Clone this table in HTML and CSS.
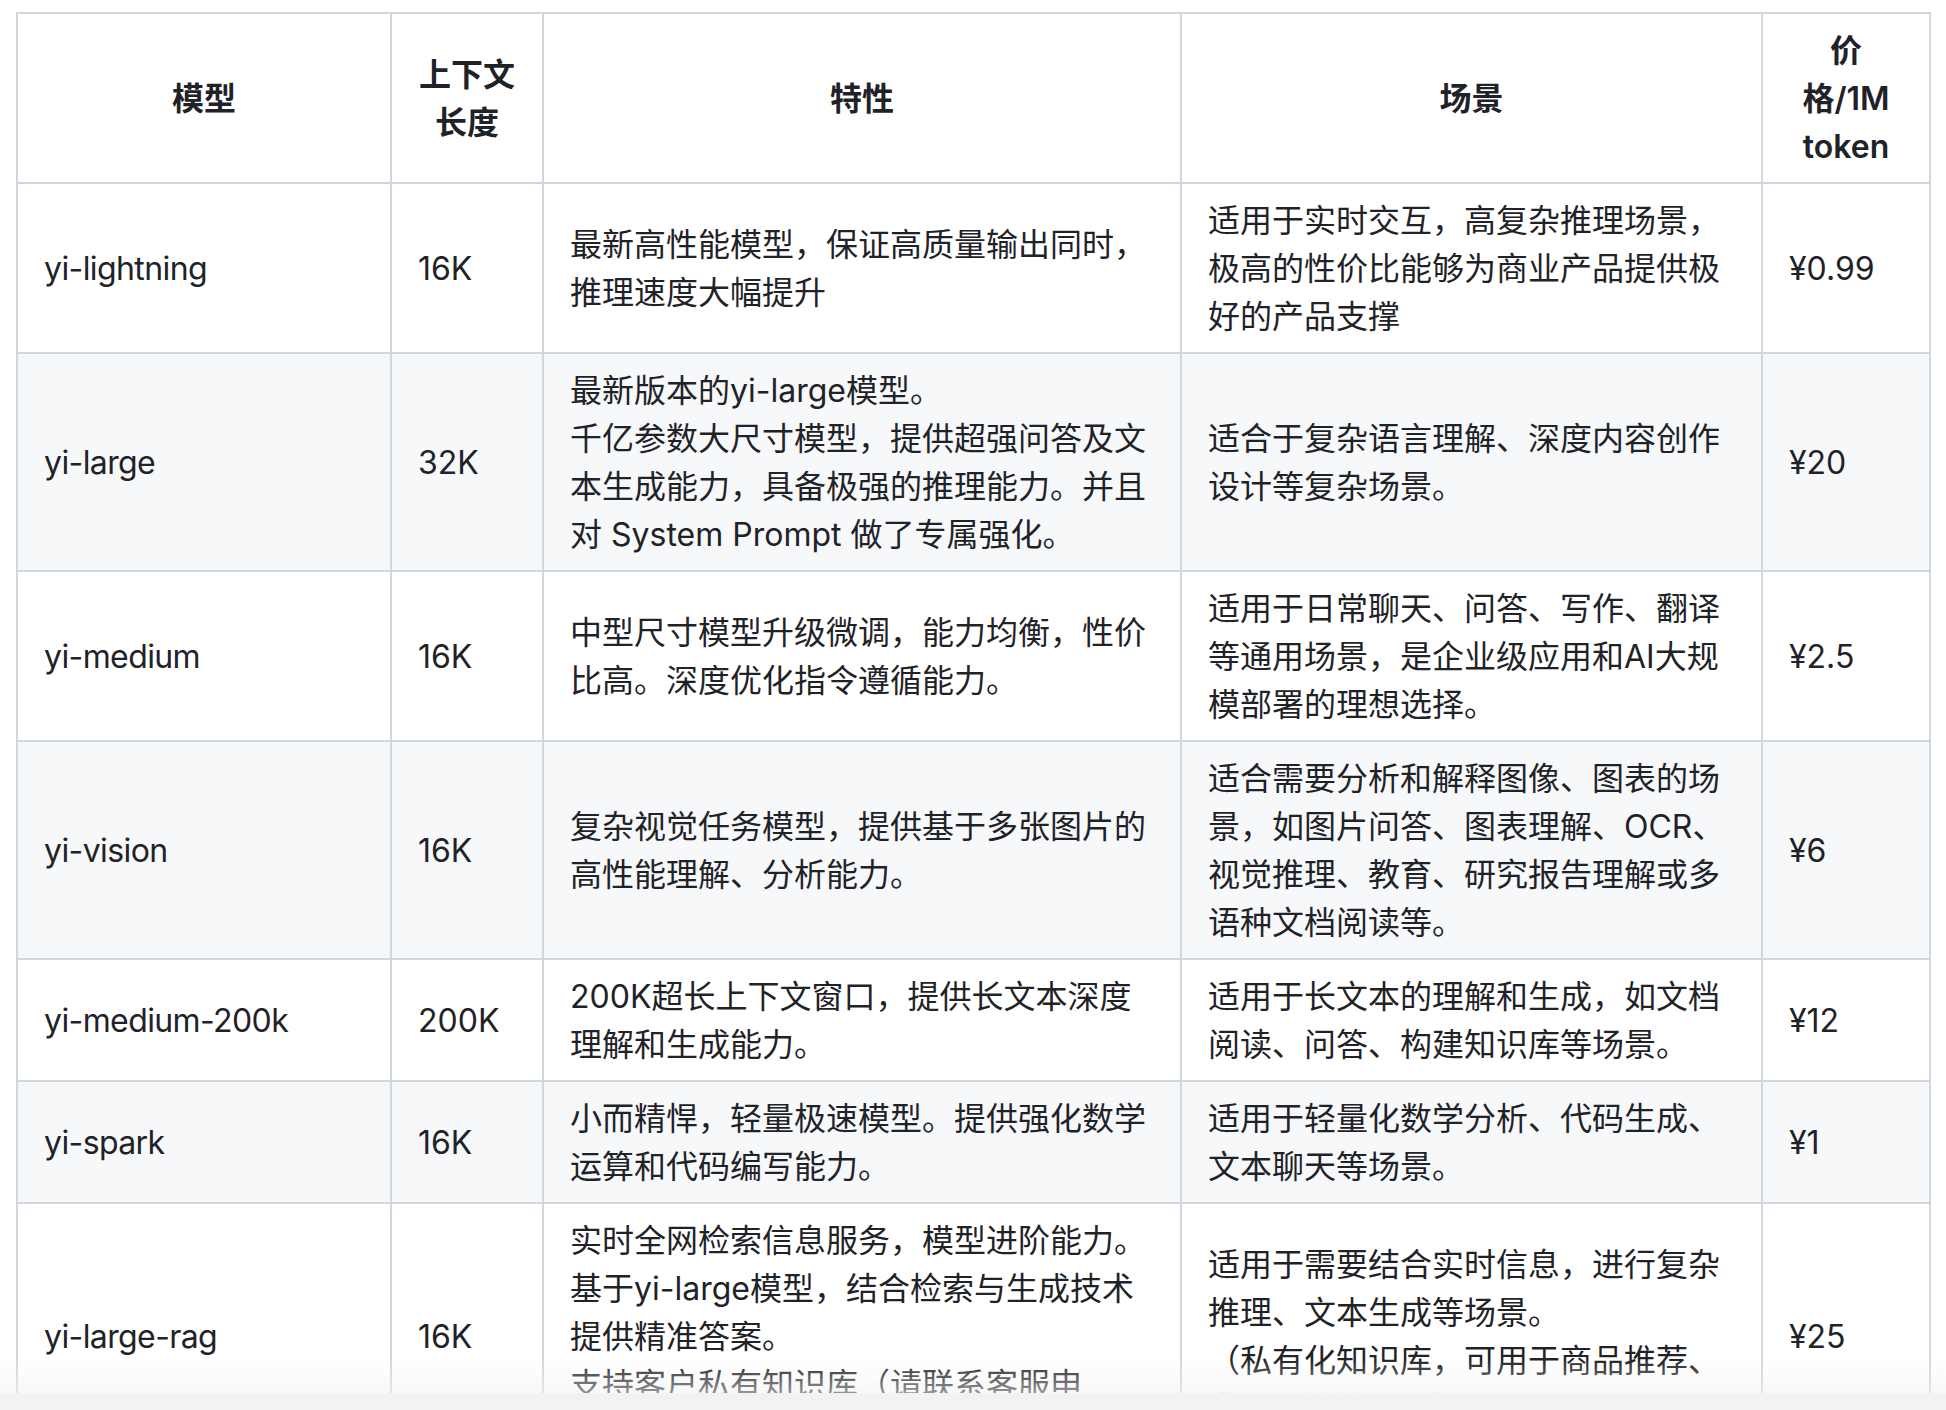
FILE: index.html
```html
<!DOCTYPE html>
<html lang="zh-CN">
<head>
<meta charset="utf-8">
<title>模型列表</title>
<link rel="stylesheet" href="styles.css">
</head>
<body>
<div class="page">
<table class="models">
<colgroup>
<col class="c-name">
<col class="c-ctx">
<col class="c-feat">
<col class="c-scene">
<col class="c-price">
</colgroup>
<thead>
<tr><th>模型</th><th>上下文长度</th><th>特性</th><th>场景</th><th>价格/1M token</th></tr>
</thead>
<tbody>
<tr>
<td>yi-lightning</td><td>16K</td>
<td>最新高性能模型，保证高质量输出同时，推理速度大幅提升</td>
<td>适用于实时交互，高复杂推理场景，极高的性价比能够为商业产品提供极好的产品支撑</td>
<td>¥0.99</td>
</tr>
<tr>
<td>yi-large</td><td>32K</td>
<td>最新版本的yi-large模型。<br>千亿参数大尺寸模型，提供超强问答及文本生成能力，具备极强的推理能力。并且对 System Prompt 做了专属强化。</td>
<td>适合于复杂语言理解、深度内容创作设计等复杂场景。</td>
<td>¥20</td>
</tr>
<tr>
<td>yi-medium</td><td>16K</td>
<td>中型尺寸模型升级微调，能力均衡，性价比高。深度优化指令遵循能力。</td>
<td>适用于日常聊天、问答、写作、翻译等通用场景，是企业级应用和AI大规模部署的理想选择。</td>
<td>¥2.5</td>
</tr>
<tr>
<td>yi-vision</td><td>16K</td>
<td>复杂视觉任务模型，提供基于多张图片的高性能理解、分析能力。</td>
<td>适合需要分析和解释图像、图表的场景，如图片问答、图表理解、OCR、视觉推理、教育、研究报告理解或多语种文档阅读等。</td>
<td>¥6</td>
</tr>
<tr>
<td>yi-medium-200k</td><td>200K</td>
<td>200K超长上下文窗口，提供长文本深度理解和生成能力。</td>
<td>适用于长文本的理解和生成，如文档阅读、问答、构建知识库等场景。</td>
<td>¥12</td>
</tr>
<tr>
<td>yi-spark</td><td>16K</td>
<td>小而精悍，轻量极速模型。提供强化数学运算和代码编写能力。</td>
<td>适用于轻量化数学分析、代码生成、文本聊天等场景。</td>
<td>¥1</td>
</tr>
<tr>
<td>yi-large-rag</td><td>16K</td>
<td>实时全网检索信息服务，模型进阶能力。<br>基于yi-large模型，结合检索与生成技术提供精准答案。<br>支持客户私有知识库（请联系客服申请）。</td>
<td>适用于需要结合实时信息，进行复杂推理、文本生成等场景。<br>（私有化知识库，可用于商品推荐、客服问答等场景）</td>
<td>¥25</td>
</tr>
</tbody>
</table>
</div>
<div class="fade"></div>
</body>
</html>
```
FILE: styles.css
```css
html, body {
  margin: 0;
  padding: 0;
  background: #ffffff;
  height: 100%;
  overflow: hidden;
}

.page {
  padding: 12px 0 0 16px;
}

.models {
  border-collapse: collapse;
  border-spacing: 0;
  table-layout: fixed;
  width: 1915px;
  font-family: "Inter", "Noto Sans CJK SC", sans-serif;
  font-size: 32px;
  line-height: 48px;
  color: #1f2328;
}

.c-name { width: 374px; }
.c-ctx { width: 152px; }
.c-feat { width: 638px; }
.c-scene { width: 581px; }
.c-price { width: 168px; }

.models th,
.models td {
  border: 2px solid #d0d7de;
  padding: 13px 26px 11px;
  vertical-align: middle;
}

.models th {
  font-weight: 600;
  text-align: center;
}

.models td {
  text-align: left;
}

.models td:first-child {
  letter-spacing: -0.6px;
}

.models tr {
  background: #ffffff;
}

.models tbody tr:nth-child(2n) {
  background: #f6f8fa;
}

.fade {
  position: fixed;
  left: 0;
  right: 0;
  bottom: 0;
  height: 17px;
  background: #f2f2f2;
}

.fade::before {
  content: "";
  position: absolute;
  left: 0;
  right: 0;
  top: -34px;
  height: 34px;
  background: linear-gradient(to bottom, rgba(242, 242, 242, 0), rgba(242, 242, 242, 0.55));
}
```
